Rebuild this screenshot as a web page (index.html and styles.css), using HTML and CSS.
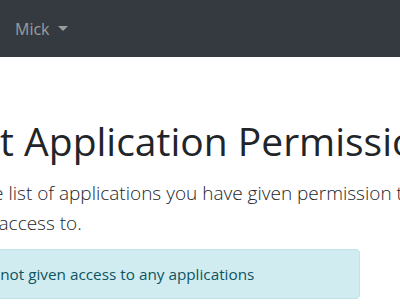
FILE: index.html
```html
<!DOCTYPE html>
<html lang="en">
<head>
<meta charset="utf-8">
<title>Client Application Permissions</title>
<link rel="stylesheet" href="styles.css">
</head>
<body>
<nav class="navbar">
  <div class="nav-item dropdown">
    <a class="nav-link dropdown-toggle" href="#">Mick<span class="caret"></span></a>
  </div>
</nav>
<main class="container">
  <h1 class="title">Client Application Permissions</h1>
  <p class="lead">Below is the list of applications you have given permission to have total access to.</p>
  <div class="alert">You have not given access to any applications</div>
</main>
</body>
</html>
```
FILE: styles.css
```css
html, body {
  margin: 0;
  padding: 0;
  background: #fff;
  overflow: hidden;
}
body {
  font-family: "Open Sans", "Noto Sans", sans-serif;
  font-size: 16px;
  line-height: 1.5;
  color: #212529;
}
.navbar {
  background: #343a40;
  height: 57px;
  display: flex;
  align-items: center;
  padding: 0 15px;
  box-sizing: border-box;
}
.nav-link {
  color: rgba(255, 255, 255, 0.5);
  text-decoration: none;
  font-size: 16px;
  display: flex;
  align-items: center;
}
.caret {
  display: inline-block;
  margin-left: 8px;
  border-top: 5px solid rgba(255, 255, 255, 0.5);
  border-left: 5px solid transparent;
  border-right: 5px solid transparent;
}
.container {
  margin-left: -90px;
  width: 540px;
  padding-top: 61px;
}
.title {
  font-size: 39px;
  font-weight: 500;
  line-height: 1.2;
  margin: 0 0 13px;
  white-space: nowrap;
}
.lead {
  font-size: 19px;
  font-weight: 300;
  line-height: 30px;
  margin: 0 0 11px;
  text-indent: -9px;
}
.alert {
  width: 450px;
  box-sizing: border-box;
  background: #d1ecf1;
  border: 1px solid #bee5eb;
  color: #0c5460;
  border-radius: 4px;
  padding: 12px 20px;
  font-size: 15.3px;
  line-height: 24px;
}
```
